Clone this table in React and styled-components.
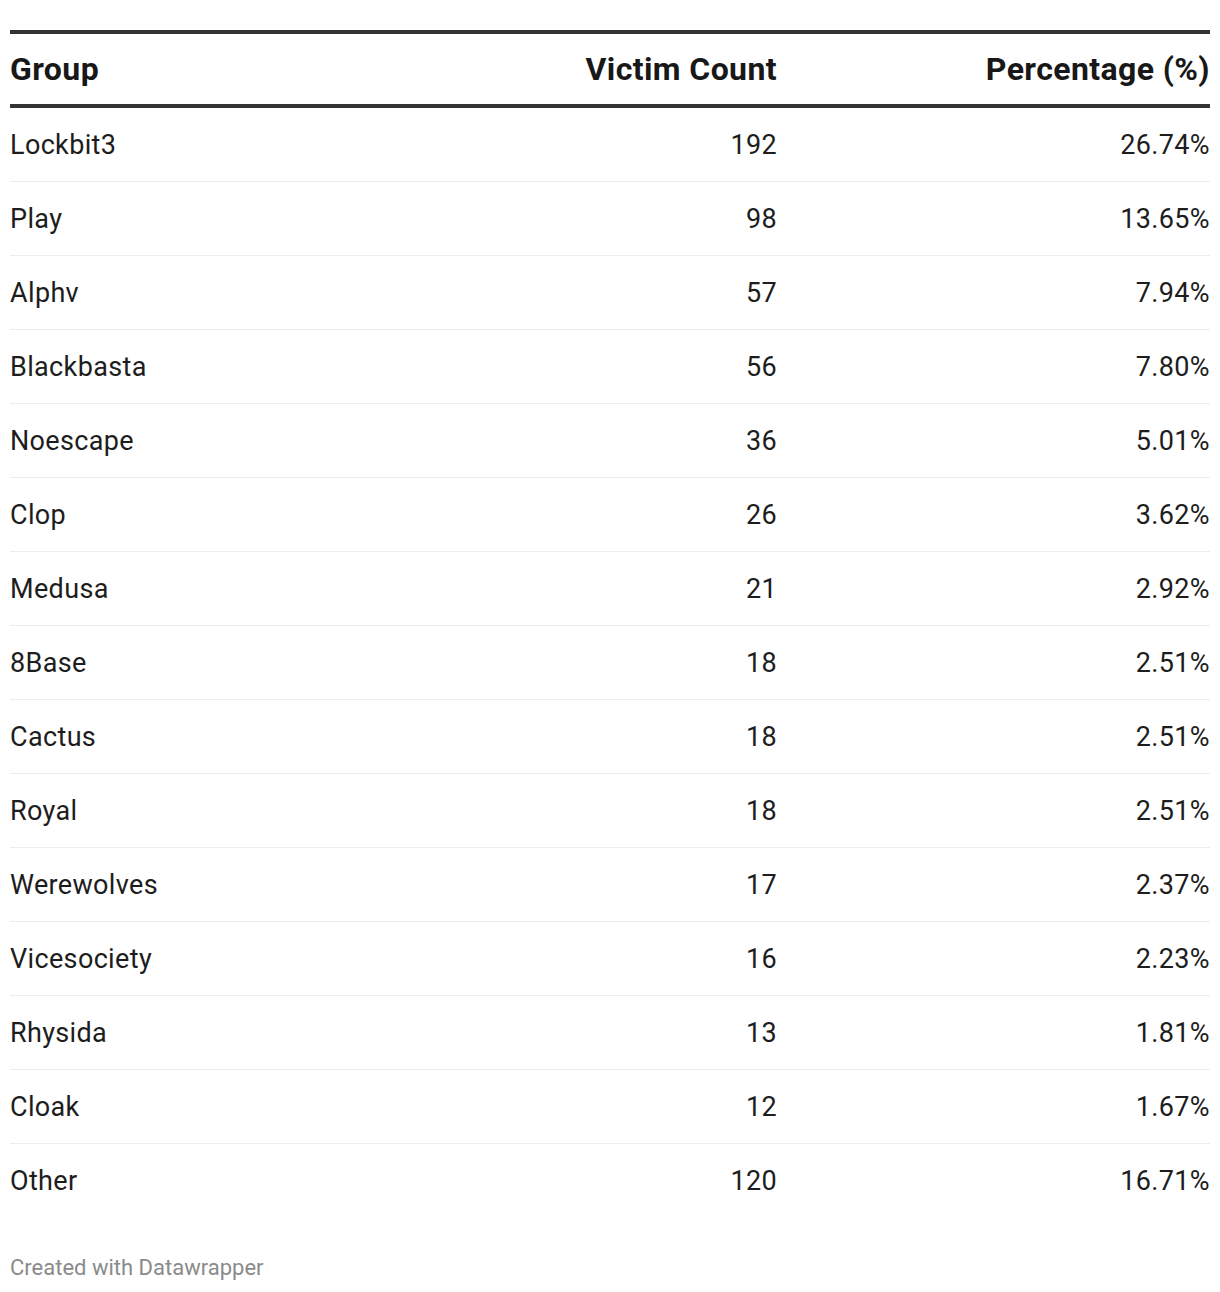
import React from "react";
import styled, { createGlobalStyle } from "styled-components";

const GlobalStyle = createGlobalStyle`
  body {
    margin: 0;
    background: #fff;
    font-family: Roboto, "Liberation Sans", sans-serif;
    color: #1d1d1d;
  }
`;

const Page = styled.div`
  padding: 30px 10px 0;
`;

const Table = styled.div`
  display: grid;
  grid-template-columns: 1fr 300px 433px;
  border-top: 4px solid #333;
`;

const Cell = styled.div`
  display: flex;
  align-items: center;
  justify-content: ${props => (props.right ? "flex-end" : "flex-start")};
  height: ${props => (props.head ? "70px" : "73px")};
  font-size: ${props => (props.head ? "32px" : "27px")};
  font-weight: ${props => (props.head ? 700 : 400)};
  color: ${props => (props.head ? "#181818" : "#1d1d1d")};
  border-bottom: ${props =>
    props.head ? "4px solid #333" : props.last ? "none" : "1px solid #ececec"};
  letter-spacing: ${props => (props.head ? "0.4px" : "0.35px")};
  white-space: nowrap;
`;

const Footer = styled.div`
  margin-top: 38px;
  font-size: 22px;
  color: #8a8a8a;
  letter-spacing: 0;
`;

const rows = [
  ["Lockbit3", 192, "26.74%"],
  ["Play", 98, "13.65%"],
  ["Alphv", 57, "7.94%"],
  ["Blackbasta", 56, "7.80%"],
  ["Noescape", 36, "5.01%"],
  ["Clop", 26, "3.62%"],
  ["Medusa", 21, "2.92%"],
  ["8Base", 18, "2.51%"],
  ["Cactus", 18, "2.51%"],
  ["Royal", 18, "2.51%"],
  ["Werewolves", 17, "2.37%"],
  ["Vicesociety", 16, "2.23%"],
  ["Rhysida", 13, "1.81%"],
  ["Cloak", 12, "1.67%"],
  ["Other", 120, "16.71%"],
];

export default function App() {
  return (
    <Page>
      <GlobalStyle />
      <Table>
        <Cell head>Group</Cell>
        <Cell head right>Victim Count</Cell>
        <Cell head right>Percentage (%)</Cell>
        {rows.map(([name, count, pct], i) => {
          const last = i === rows.length - 1;
          return (
            <React.Fragment key={name}>
              <Cell last={last}>{name}</Cell>
              <Cell last={last} right>{count}</Cell>
              <Cell last={last} right>{pct}</Cell>
            </React.Fragment>
          );
        })}
      </Table>
      <Footer>Created with Datawrapper</Footer>
    </Page>
  );
}
